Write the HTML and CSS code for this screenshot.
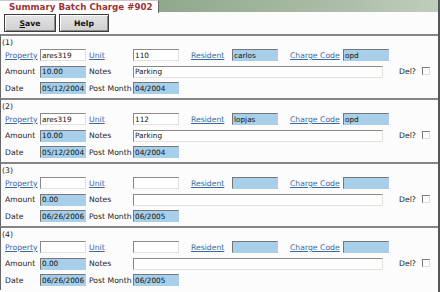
FILE: index.html
```html
<!DOCTYPE html>
<html lang="en">
<head>
    <meta charset="UTF-8">
    <title>Summary Batch Charge #902</title>
    <link rel="stylesheet" href="styles.css">
</head>
<body>
    <div class="page">
        <div class="header">
            <div class="tab">Summary Batch Charge #902</div>
            <div class="bar"></div>
        </div>

        <div class="toolbar">
            <button class="btn btn-save"><u>S</u>ave</button>
            <button class="btn btn-help">Help</button>
        </div>

        <div class="entry">
            <div class="entry-num">(1)</div>
            <div class="entry-row">
                <a href="#" class="lbl">Property</a><input class="fld" value="ares319">
                <a href="#" class="lbl">Unit</a><input class="fld" value="110">
                <a href="#" class="lbl">Resident</a><input class="fld hi" value="carlos">
                <a href="#" class="lbl">Charge Code</a><input class="fld hi" value="opd">
            </div>
            <div class="entry-row">
                <span class="lbl">Amount</span><input class="fld hi" value="10.00">
                <span class="lbl">Notes</span><input class="fld notes" value="Parking">
                <span class="del">Del? <input type="checkbox" class="chk"></span>
            </div>
            <div class="entry-row">
                <span class="lbl">Date</span><input class="fld hi" value="05/12/2004">
                <span class="lbl">Post Month</span><input class="fld hi" value="04/2004">
            </div>
        </div>

        <div class="entry">
            <div class="entry-num">(2)</div>
            <div class="entry-row">
                <a href="#" class="lbl">Property</a><input class="fld" value="ares319">
                <a href="#" class="lbl">Unit</a><input class="fld" value="112">
                <a href="#" class="lbl">Resident</a><input class="fld hi" value="lopjas">
                <a href="#" class="lbl">Charge Code</a><input class="fld hi" value="opd">
            </div>
            <div class="entry-row">
                <span class="lbl">Amount</span><input class="fld hi" value="10.00">
                <span class="lbl">Notes</span><input class="fld notes" value="Parking">
                <span class="del">Del? <input type="checkbox" class="chk"></span>
            </div>
            <div class="entry-row">
                <span class="lbl">Date</span><input class="fld hi" value="05/12/2004">
                <span class="lbl">Post Month</span><input class="fld hi" value="04/2004">
            </div>
        </div>

        <div class="entry">
            <div class="entry-num">(3)</div>
            <div class="entry-row">
                <a href="#" class="lbl">Property</a><input class="fld" value="">
                <a href="#" class="lbl">Unit</a><input class="fld" value="">
                <a href="#" class="lbl">Resident</a><input class="fld hi" value="">
                <a href="#" class="lbl">Charge Code</a><input class="fld hi" value="">
            </div>
            <div class="entry-row">
                <span class="lbl">Amount</span><input class="fld hi" value="0.00">
                <span class="lbl">Notes</span><input class="fld notes" value="">
                <span class="del">Del? <input type="checkbox" class="chk"></span>
            </div>
            <div class="entry-row">
                <span class="lbl">Date</span><input class="fld hi" value="06/26/2006">
                <span class="lbl">Post Month</span><input class="fld hi" value="06/2005">
            </div>
        </div>

        <div class="entry">
            <div class="entry-num">(4)</div>
            <div class="entry-row">
                <a href="#" class="lbl">Property</a><input class="fld" value="">
                <a href="#" class="lbl">Unit</a><input class="fld" value="">
                <a href="#" class="lbl">Resident</a><input class="fld hi" value="">
                <a href="#" class="lbl">Charge Code</a><input class="fld hi" value="">
            </div>
            <div class="entry-row">
                <span class="lbl">Amount</span><input class="fld hi" value="0.00">
                <span class="lbl">Notes</span><input class="fld notes" value="">
                <span class="del">Del? <input type="checkbox" class="chk"></span>
            </div>
            <div class="entry-row">
                <span class="lbl">Date</span><input class="fld hi" value="06/26/2006">
                <span class="lbl">Post Month</span><input class="fld hi" value="06/2005">
            </div>
        </div>
    </div>
</body>
</html>
```

FILE: styles.css
```css
* {
    margin: 0;
    padding: 0;
    box-sizing: border-box;
}

body {
    font-family: "DejaVu Sans", Verdana, sans-serif;
    font-size: 7.7px;
    color: #222;
    background-color: #fff;
}

.page {
    width: 440px;
    height: 292px;
    border-right: 2px solid #555;
    background-color: #fcfcfc;
    overflow: hidden;
}

.header {
    display: flex;
    align-items: flex-start;
}

.tab {
    width: 159px;
    height: 13px;
    line-height: 13px;
    padding-left: 9px;
    border-right: 1px solid #666;
    border-top: 1px solid #c8c8c8;
    background-color: #fff;
    color: #9c3434;
    font-weight: bold;
    font-size: 8.7px;
    white-space: nowrap;
}

.bar {
    flex: 1;
    height: 12px;
    background: linear-gradient(to right, #8fa88c, #a9bca5 60%, #bfcdba);
}

.toolbar {
    display: flex;
    gap: 3px;
    height: 21px;
    padding: 1px 0 0 4px;
}

.btn {
    height: 18px;
    font-family: "DejaVu Sans", Verdana, sans-serif;
    font-size: 7.7px;
    font-weight: bold;
    color: #111;
    background: linear-gradient(#e4e4e4, #cfcfcf);
    border: 1px solid #3c3c3c;
    box-shadow: inset 1px 1px #fff, inset -1px -1px #8a8a8a;
}

.btn-save {
    width: 52px;
}

.btn-help {
    width: 50px;
}

.entry {
    height: 64px;
    border-top: 2px solid #858585;
    border-left: 1px solid #666;
    padding-left: 4px;
}

.entry-num {
    height: 11px;
    line-height: 11px;
    margin-left: -3px;
    padding-top: 1px;
    color: #222;
}

.entry-row {
    display: grid;
    grid-template-columns: 35px 49px 44px 58px 41px 58px 53px 46px 1fr;
    align-items: center;
    height: 16.5px;
}

.lbl {
    white-space: nowrap;
    color: #222;
}

a.lbl {
    color: #3769a3;
    text-decoration: underline;
}

.fld {
    width: 46px;
    height: 12px;
    padding: 0 0 0 1px;
    font-family: "DejaVu Sans", Verdana, sans-serif;
    font-size: 7.3px;
    color: #111;
    background-color: #fff;
    border: 1px solid;
    border-color: #8a8a8a #e2e2da #e2e2da #8a8a8a;
    outline: none;
}

.hi {
    background-color: #a7cfea;
    border-color: #777 #a7cfea #a7cfea #777;
}

.notes {
    grid-column: 4 / 9;
    width: 250px;
}

.del {
    grid-column: 9;
    display: flex;
    align-items: center;
    gap: 6px;
    padding-left: 10px;
    white-space: nowrap;
}

.chk {
    appearance: none;
    width: 8px;
    height: 8px;
    margin-top: -2px;
    background-color: #fff;
    border: 1px solid;
    border-color: #777 #ddd #ddd #777;
}
```
